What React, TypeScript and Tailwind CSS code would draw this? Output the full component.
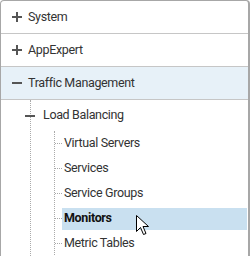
import React from 'react'

const font = { fontFamily: 'Roboto, "Open Sans", sans-serif' }

function Plus() {
  return (
    <svg width="10" height="10" viewBox="0 0 10 10" className="shrink-0">
      <rect x="0" y="4" width="10" height="2" fill="#555" />
      <rect x="4" y="0" width="2" height="10" fill="#555" />
    </svg>
  )
}

function Minus() {
  return (
    <svg width="10" height="10" viewBox="0 0 10 10" className="shrink-0">
      <rect x="0" y="4" width="10" height="2" fill="#555" />
    </svg>
  )
}

function Cursor() {
  return (
    <svg width="13" height="22" viewBox="0 0 13 22" className="absolute left-[74px] top-[7px]">
      <path
        d="M0.5 0.5 L0.5 16.5 L4.5 12.5 L7.5 19.5 L10 18.5 L7 11.5 L12.5 11.5 Z"
        fill="#fff"
        stroke="#000"
        strokeWidth="1"
        strokeLinejoin="miter"
      />
    </svg>
  )
}

const children = ['Virtual Servers', 'Services', 'Service Groups', 'Monitors', 'Metric Tables']

export default function App() {
  return (
    <div className="w-[250px] h-[256px] bg-white overflow-hidden text-[12.5px] tracking-[-0.35px] text-[#333]" style={font}>
      <div className="h-full flex flex-col border-t border-l border-r-2 border-[#a7a7a7] rounded-t-[4px]">
        <div className="h-[33px] shrink-0 flex items-center gap-[6px] pl-[11px] border-b border-[#c6c6c6]">
          <Plus />
          <span>System</span>
        </div>
        <div className="h-[33px] shrink-0 flex items-center gap-[6px] pl-[11px] border-b border-[#c6c6c6]">
          <Plus />
          <span>AppExpert</span>
        </div>
        <div className="h-[33px] shrink-0 flex items-center gap-[6px] pl-[11px] border-b border-[#c6c6c6] bg-[#e7f1f8]">
          <Minus />
          <span>Traffic Management</span>
        </div>
        <div className="flex-1 ml-[29px] border-l border-dotted border-[#aaa]">
          <div className="h-[31px] flex items-center -ml-[6px]">
            <Minus />
            <span className="ml-[8px]">Load Balancing</span>
          </div>
          <div className="ml-[23px] border-l border-dotted border-[#aaa] h-full">
            {children.map((c) => (
              <div key={c} className="h-[25px] flex items-center">
                <div className="w-[7px] border-t border-dotted border-[#aaa] shrink-0" />
                <div
                  className={
                    c === 'Monitors'
                      ? 'relative flex-1 h-[22px] flex items-center pl-[2px] bg-[#c9e0f0] font-bold text-[#111] mr-[1px]'
                      : 'flex-1 h-[22px] flex items-center pl-[2px]'
                  }
                >
                  {c}
                  {c === 'Monitors' && <Cursor />}
                </div>
              </div>
            ))}
          </div>
        </div>
      </div>
    </div>
  )
}
